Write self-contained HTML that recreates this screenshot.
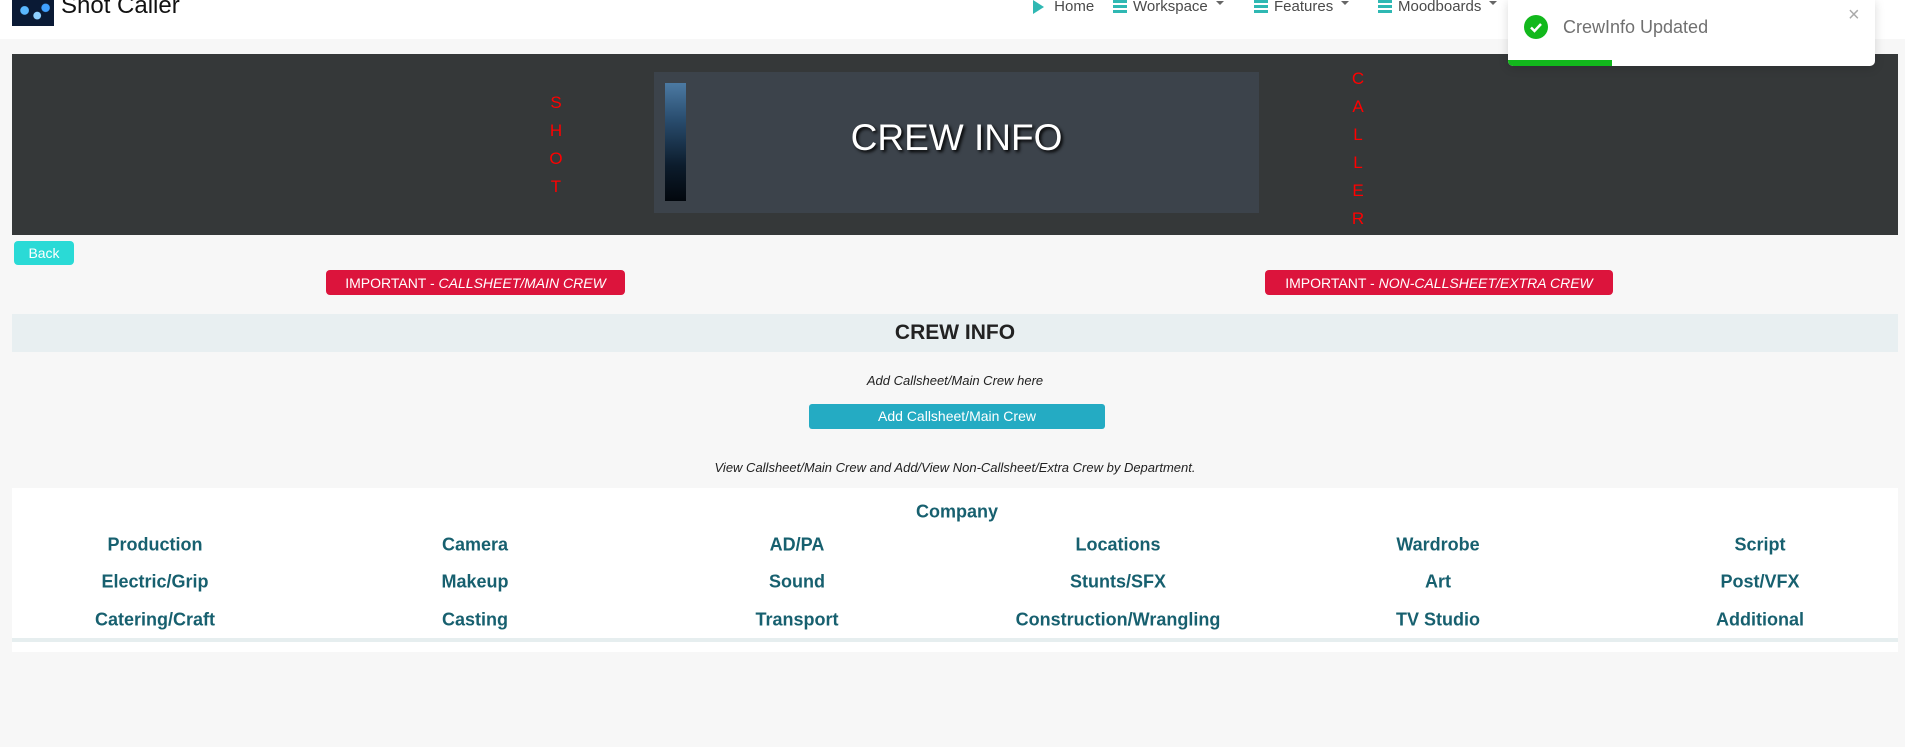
<!DOCTYPE html>
<html><head><meta charset="utf-8"><style>
*{margin:0;padding:0;box-sizing:border-box}
body{width:1905px;height:747px;background:#f7f7f7;font-family:"Liberation Sans",sans-serif;position:relative;overflow:hidden}
.a{position:absolute}
.nav{left:0;top:0;width:1905px;height:39px;background:#fff}
.ni{top:-2px;font-size:15px;color:#4a4a4a;display:flex;align-items:center;gap:6px}
.bars{width:14px;height:13px;display:flex;flex-direction:column;justify-content:space-between}
.bars i{display:block;height:3px;background:#2fb8b3}
.car{display:inline-block;border-left:4px solid transparent;border-right:4px solid transparent;border-top:4px solid #666;margin-left:2px;margin-top:-8px}
.let{color:#f00;font-size:17px;width:20px;text-align:center}
.imp{height:25px;background:#dc143c;color:#fff;border-radius:4px;font-size:14px;display:flex;align-items:center;justify-content:center}
.d{font-weight:bold;font-size:18px;color:#17606f;transform:translate(-50%,-50%);white-space:nowrap}
</style></head><body>
<div class="a nav"></div>
<div class="a" style="left:12px;top:0;width:42px;height:26px;background:radial-gradient(circle at 30% 40%,#5ab8ff 0 12%,transparent 14%),radial-gradient(circle at 60% 60%,#8fd0ff 0 12%,transparent 14%),radial-gradient(circle at 80% 30%,#3fa0ff 0 10%,transparent 12%),#0a1a35"></div>
<div class="a" style="left:61px;top:-8px;font-size:24px;color:#111">Shot Caller</div>
<div class="a ni" style="left:1033px"><span style="border-left:11px solid #2fb8b3;border-top:7px solid transparent;border-bottom:7px solid transparent"></span>&nbsp;Home</div>
<div class="a ni" style="left:1113px"><span class="bars"><i></i><i></i><i></i></span>Workspace<span class="car"></span></div>
<div class="a ni" style="left:1254px"><span class="bars"><i></i><i></i><i></i></span>Features<span class="car"></span></div>
<div class="a ni" style="left:1378px"><span class="bars"><i></i><i></i><i></i></span>Moodboards<span class="car"></span></div>

<div class="a" style="left:12px;top:54px;width:1886px;height:181px;background:#353839"></div>
<div class="a" style="left:654px;top:72px;width:605px;height:141px;background:#3c434b"></div>
<div class="a" style="left:665px;top:83px;width:21px;height:118px;background:linear-gradient(180deg,#4c7aa3 0%,#2a4e70 30%,#0c1c2c 70%,#02070d 100%)"></div>
<div class="a" style="left:654px;top:117px;width:605px;text-align:center;font-size:37px;color:#fff;text-shadow:2px 2px 3px #000">CREW INFO</div>
<div class="a" style="left:546px;top:93px">
<div class="let" style="height:28px">S</div><div class="let" style="height:28px">H</div><div class="let" style="height:28px">O</div><div class="let" style="height:28px">T</div></div>
<div class="a" style="left:1348px;top:69px">
<div class="let" style="height:28px">C</div><div class="let" style="height:28px">A</div><div class="let" style="height:28px">L</div><div class="let" style="height:28px">L</div><div class="let" style="height:28px">E</div><div class="let" style="height:28px">R</div></div>

<div class="a" style="left:1508px;top:0;width:367px;height:66px;background:#fff;border-radius:0 0 5px 5px;box-shadow:0 2px 10px rgba(0,0,0,.15);overflow:hidden">
<div class="a" style="left:16px;top:15px;width:24px;height:24px;border-radius:50%;background:#12b81c"></div>
<svg class="a" style="left:16px;top:15px" width="24" height="24"><path d="M7 12.5l3.5 3.5L17 9" stroke="#fff" stroke-width="2.5" fill="none"/></svg>
<div class="a" style="left:55px;top:17px;font-size:18px;color:#707070">CrewInfo Updated</div>
<div class="a" style="left:340px;top:4px;font-size:20px;color:#aaa">×</div>
<div class="a" style="left:0;top:60px;width:104px;height:6px;background:#12b81c"></div>
</div>

<div class="a" style="left:14px;top:241px;width:60px;height:24px;background:#2adad6;border-radius:4px;color:#fff;font-size:14px;text-align:center;line-height:24px">Back</div>
<div class="a imp" style="left:326px;top:270px;width:299px">IMPORTANT -&nbsp;<i>CALLSHEET/MAIN CREW</i></div>
<div class="a imp" style="left:1265px;top:270px;width:348px">IMPORTANT -&nbsp;<i>NON-CALLSHEET/EXTRA CREW</i></div>

<div class="a" style="left:12px;top:314px;width:1886px;height:38px;background:#e8eff1;text-align:center;font-weight:bold;font-size:21px;line-height:38px;color:#222">CREW INFO</div>
<div class="a" style="left:12px;top:373px;width:1886px;text-align:center;font-style:italic;font-size:13px;color:#222">Add Callsheet/Main Crew here</div>
<div class="a" style="left:809px;top:404px;width:296px;height:25px;background:#24abc3;border-radius:3px;color:#fff;font-size:14px;text-align:center;line-height:25px">Add Callsheet/Main Crew</div>
<div class="a" style="left:12px;top:460px;width:1886px;text-align:center;font-style:italic;font-size:13px;color:#222">View Callsheet/Main Crew and Add/View Non-Callsheet/Extra Crew by Department.</div>

<div class="a" style="left:12px;top:488px;width:1886px;height:164px;background:#fff"></div>
<div class="a" style="left:12px;top:638px;width:1886px;height:4px;background:#e6eeef"></div>
<div class="a d" style="left:957px;top:512px">Company</div>
<div class="a d" style="left:155px;top:545px">Production</div><div class="a d" style="left:475px;top:545px">Camera</div><div class="a d" style="left:797px;top:545px">AD/PA</div><div class="a d" style="left:1118px;top:545px">Locations</div><div class="a d" style="left:1438px;top:545px">Wardrobe</div><div class="a d" style="left:1760px;top:545px">Script</div>
<div class="a d" style="left:155px;top:582px">Electric/Grip</div><div class="a d" style="left:475px;top:582px">Makeup</div><div class="a d" style="left:797px;top:582px">Sound</div><div class="a d" style="left:1118px;top:582px">Stunts/SFX</div><div class="a d" style="left:1438px;top:582px">Art</div><div class="a d" style="left:1760px;top:582px">Post/VFX</div>
<div class="a d" style="left:155px;top:620px">Catering/Craft</div><div class="a d" style="left:475px;top:620px">Casting</div><div class="a d" style="left:797px;top:620px">Transport</div><div class="a d" style="left:1118px;top:620px">Construction/Wrangling</div><div class="a d" style="left:1438px;top:620px">TV Studio</div><div class="a d" style="left:1760px;top:620px">Additional</div>
</body></html>
